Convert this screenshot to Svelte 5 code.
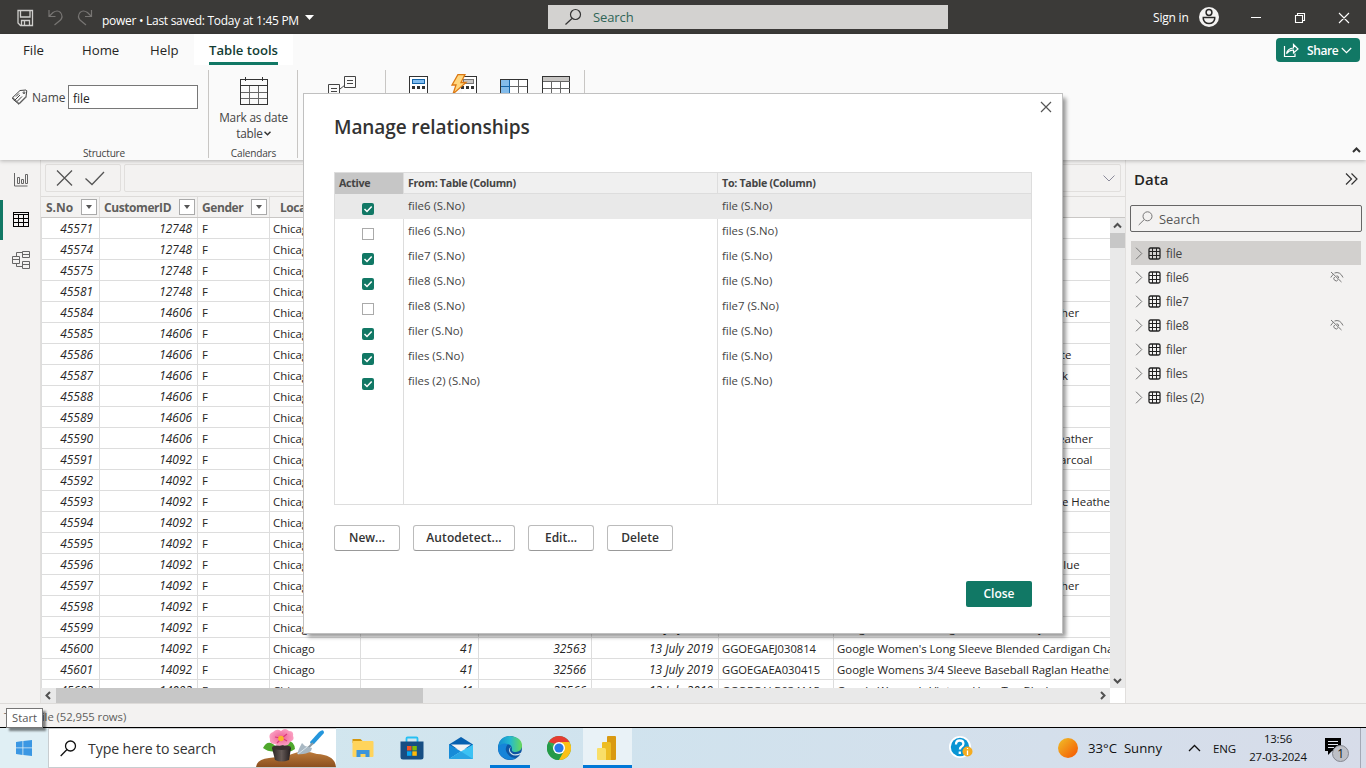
<script>
  const ids = [45571, 45574, 45575, 45581, 45584, 45585, 45586, 45587, 45588, 45589, 45590, 45591, 45592, 45593, 45594, 45595, 45596, 45597, 45598, 45599, 45600, 45601, 45602];
  // Trailing part of long product names, with its offset inside the column
  const tails = {
    45584: ['her', 228], 45586: ['te', 228], 45587: ['k', 229],
    45590: ['eather', 225], 45591: ['arcoal', 227], 45593: ['e Heather', 229],
    45596: ['Blue', 223], 45597: ['ther', 224]
  };
  const full = {
    45599: ['41', '32560', '13 July 2019', 'GGOEGAEJ030813', "Google Women's Long Sleeve Tee Navy"],
    45600: ['41', '32563', '13 July 2019', 'GGOEGAEJ030814', "Google Women's Long Sleeve Blended Cardigan Charcoal"],
    45601: ['41', '32566', '13 July 2019', 'GGOEGAEA030415', 'Google Womens 3/4 Sleeve Baseball Raglan Heather'],
    45602: ['41', '32566', '13 July 2019', 'GGOEGALB034115', "Google Women's Vintage Hero Tee Black"]
  };
  const rows = ids.map((id, i) => ({
    id, customer: i < 4 ? 12748 : i < 11 ? 14606 : 14092, tail: tails[id], full: full[id]
  }));
  const relations = [
    [true, 'file6 (S.No)', 'file (S.No)'], [false, 'file6 (S.No)', 'files (S.No)'],
    [true, 'file7 (S.No)', 'file (S.No)'], [true, 'file8 (S.No)', 'file (S.No)'],
    [false, 'file8 (S.No)', 'file7 (S.No)'], [true, 'filer (S.No)', 'file (S.No)'],
    [true, 'files (S.No)', 'file (S.No)'], [true, 'files (2) (S.No)', 'file (S.No)']
  ];
  const tables = [['file', false], ['file6', true], ['file7', false], ['file8', true], ['filer', false], ['files', false], ['files (2)', false]];
</script>

<div class="screen">
  <header class="titlebar">
    <svg class="quick" width="100" height="34" fill="none" stroke="#d0cfcd">
      <path d="M18 10.500h14.500v15H20.500l-2.500-2.500zM20.500 10.500v6.500h9.500v-6.500M21.500 25.500v-5h8v5M24.500 21v4" stroke-width="1.300" />
      <path d="M49 10v6.500h6.500M49 16.500l4-4q4.500-3 7.500 0 3 4 0 7.500l-6 5" stroke="#777573" stroke-width="1.200" />
      <path d="M91.500 10v6.500H85M91.500 16.500l-4-4q-4.500-3-7.500 0-3 4 0 7.500l6 5" stroke="#777573" stroke-width="1.200" />
    </svg>
    <span class="doc">power • Last saved: Today at 1:45 PM</span>
    <svg class="drop" width="9" height="5"><path d="M0 0h9l-4.500 5z" fill="#fff" /></svg>
    <div class="topsearch">
      <svg width="18" height="18" fill="none" stroke="#333" stroke-width="1.2"><circle cx="10.500" cy="6.500" r="5" /><path d="M7 10.500l-6.500 6" /></svg>
      <span>Search</span>
    </div>
    <span class="signin">Sign in</span>
    <svg class="user" width="20" height="20"><circle cx="10" cy="10" r="10" fill="#f3f2f1" /><g fill="none" stroke="#292827" stroke-width="1.5"><circle cx="10" cy="5.500" r="2.900" /><path d="M4.300 10.500h11.400v1.500q-1 4.500-5.700 4.500t-5.700-4.500z" /></g></svg>
    <svg class="winbtns" width="120" height="34" fill="none" stroke="#fff" stroke-width="1.1">
      <path d="M11 17.500h10M55.500 15.500h7v7h-7zM57.500 15.500v-2h7v7h-2M99 13l10 10M109 13l-10 10" />
    </svg>
  </header>

  <section class="ribbon">
    <nav class="tabs">
      <span class="tab t-file">File</span><span class="tab t-home">Home</span><span class="tab t-help">Help</span>
      <span class="tab on"><b>Table tools</b></span>
      <button class="share">
        <svg width="17" height="15" fill="none" stroke="#fff" stroke-width="1.2"><path d="M1.500 3v10.500h10.500v-3M3.500 10.500q1-5 7-5.500V1.500l4.500 4.500-4.500 4v-2.800q-4-.4-7 3.300z" /></svg>
        <span>Share</span>
        <svg width="11" height="7" fill="none" stroke="#fff" stroke-width="1.200"><path d="M.8 1l4.700 4.700L10.200 1" /></svg>
      </button>
    </nav>
    <div class="groups">
      <div class="group structure">
        <div class="namerow">
          <svg width="16" height="16" fill="none" stroke="#444" stroke-width="1"><path d="M.7 8.500L8 1.500l6-.5.800.8-.8 5.700-7 7zM3 11l5-5M5 12.500l5-5M4 7.500l3-3M.7 8.500v1.500l6.300 5.300 7-7V7.500" /><circle cx="12" cy="3.700" r=".9" /></svg>
          <span class="lab">Name</span><div class="field">file</div>
        </div>
        <span class="glabel">Structure</span>
      </div>
      <div class="group calendars">
        <svg width="28" height="28" fill="none" stroke="#333" shape-rendering="crispEdges"><path d="M.5 2.500h27v25h-27zM.5 8.500h27M5.500 0v4M22.500 0v4" /><path d="M1 15.500h26M1 21.500h26M9.500 9v18M18.500 9v18" stroke="#666" /></svg>
        <span class="big">Mark as date</span>
        <span class="big second">table<svg width="7" height="5" fill="none" stroke="#333" stroke-width="1.500"><path d="M.5.7l3 3 3-3" /></svg></span>
        <span class="glabel">Calendars</span>
      </div>
      <div class="group links"><svg width="30" height="20" fill="none" stroke="#444"><path d="M16.500.5h11v11h-11zM.5 8.500h11v11h-11zM19 4.500h6M19 7.500h6M3 12.500h6M3 15.500h6M12 13l5-4" /></svg></div>
      <div class="group calcs">
        <svg width="170" height="30" fill="none" stroke="#333">
          <g shape-rendering="crispEdges"><path d="M2.500 2.500h18v18h-18zM54.500 2.500h15v18h-15" fill="#fff" /><path d="M5.500 5.500h12v4h-12z" fill="#82bdf0" stroke="#1464a8" /><path d="M56 5.500h10v4h-10z" fill="#c8c6c4" stroke="#777" /><path d="M5 13.500h13M54 13.500h13" stroke-width="3" stroke-dasharray="3 2" /></g>
          <path d="M51 .500h7l-4 8h5L46 20l3-9h-4z" fill="#ffd780" stroke="#dc7812" stroke-width="1.300" />
          <g shape-rendering="crispEdges"><path d="M93.500 5.500h27v20h-27z" fill="#fff" /><path d="M94 6h9v20h-9z" fill="#83bceb" stroke="none" /><path d="M94 12.500h27M102.500 6v18M111.500 6v18" stroke="#666" /><path d="M93.500 26V5.500h9V26M94 12.500h9" stroke="#1464a8" /><path d="M93.500 5.500h27v20h-27z" /><path d="M135.500 2.500h27v25h-27z" fill="#fff" /><path d="M136 3h26v4h-26z" fill="#c8c6c4" stroke="none" /><path d="M135.500 7.500h27M135.500 14.500h27M144.500 8v12M153.500 8v12" stroke="#666" /></g>
        </svg>
      </div>
      <svg class="collapse" width="9" height="6" fill="none" stroke="#333" stroke-width="2"><path d="M1 5l3.500-3.500L8 5" /></svg>
    </div>
  </section>

  <main>
    <aside class="rail">
      <svg width="40" height="120" fill="none" stroke="#666">
        <path d="M14.500 13v13h13M17.500 17.500h2v6h-2zM21.500 19.500h2v4h-2zM25.500 14.500h2v9h-2z" stroke-width="1" />
        <rect x="0" y="40" width="3" height="40" fill="#117865" stroke="none" />
        <path d="M13.500 52.500h15v14h-15zM13 54h16M14 58.500h14M14 62.500h14M18.500 54v12M23.500 54v12" stroke="#000" shape-rendering="crispEdges" />
        <path d="M12.500 96.500h7v7h-7zM22.500 91.500h7v6h-7zM22.500 101.500h7v7h-7zM12.500 99.500h7M22.500 94.500h7M22.500 104.500h7M16.500 96v-3.500h6M16.500 104v2.500h6" />
      </svg>
    </aside>
    <section class="datagrid">
      <div class="formula">
        <div class="okbox"><svg width="74" height="26" fill="none" stroke="#555" stroke-width="1.300"><path d="M11 5.500l15 15M26 5.500l-15 15M39.500 13.500l6.500 6 12-12.500" /></svg></div>
        <div class="expr"><svg width="12" height="7" fill="none" stroke="#8a8a9a"><path d="M.5.5L6 6 11.500.5" /></svg></div>
      </div>
      <div class="colheads">
        {#each ['S.No', 'CustomerID', 'Gender'] as h}
          <div class="hcell"><span>{h}</span><i class="filter"><svg width="6" height="4"><path d="M0 0h6L3 4z" fill="#555" /></svg></i></div>
        {/each}
        <div class="hcell loc"><span>Location</span></div>
      </div>
      <div class="gridbody">
        <div class="rows">
          {#each rows as r}
            <div class="row">
              <span class="num">{r.id}</span><span class="num">{r.customer}</span><span class="gender">F</span><span>Chicago</span>
              {#if r.full}
                <span class="num">{r.full[0]}</span><span class="num">{r.full[1]}</span><span class="num">{r.full[2]}</span><span class="sku">{r.full[3]}</span><span class="last">{r.full[4]}</span>
              {:else}
                <span></span><span></span><span></span><span></span>
                <span class="last">{#if r.tail}<em style="margin-left: {r.tail[1] - 4}px">{r.tail[0]}</em>{/if}</span>
              {/if}
            </div>
          {/each}
        </div>
        <div class="vbar">
          <svg width="15" height="15" fill="none" stroke="#505050" stroke-width="2"><path d="M4 9.500L7.500 6 11 9.500" /></svg>
          <div class="vthumb"></div>
          <svg width="15" height="15" fill="none" stroke="#505050" stroke-width="2"><path d="M4 6l3.500 3.500L11 6" /></svg>
        </div>
      </div>
      <div class="hbar">
        <svg width="15" height="15" fill="none" stroke="#505050" stroke-width="2"><path d="M9 4L5.500 7.500 9 11" /></svg>
        <div class="hthumb"></div>
        <svg class="hr" width="15" height="15" fill="none" stroke="#505050" stroke-width="2"><path d="M6 4l3.500 3.500L6 11" /></svg>
        <div class="corner"></div>
      </div>
    </section>
    <aside class="fields">
      <div class="fhead"><b>Data</b><svg width="13" height="12" fill="none" stroke="#333" stroke-width="1.200"><path d="M1 .5L6.500 6 1 11.500M6.500.5L12 6l-5.500 5.500" /></svg></div>
      <div class="fsearch"><svg width="15" height="15" fill="none" stroke="#777"><circle cx="9.500" cy="5.300" r="4.500" /><path d="M6.300 8.500L.7 14" /></svg><span>Search</span></div>
      {#each tables as [name, hidden], i}
        <div class="frow" class:sel={i === 0}>
          <svg width="8" height="13" fill="none" stroke="#777"><path d="M1 .7l5.800 5.800L1 12.300" /></svg>
          <svg class="tbl" width="13" height="13" fill="none" stroke="#222"><rect x="1" y="1" width="11" height="11" rx="1.500" stroke-width="1.300" /><path d="M1 4.500h11M1 8.500h11M4.500 1v11M8.500 1v11" /></svg>
          <span>{name}</span>
          {#if hidden}<svg class="eye" width="14" height="12" fill="none" stroke="#777"><path d="M1 1l10.500 10M.8 6.500Q1.800 4.300 3.500 3.300M4.500 2q5.500-2 8.500 4.500" /><path d="M4.600 6a2.200 2.200 0 1 0 3.400 2.700M6.500 4.800a2.200 2.200 0 0 1 2.200 2.200" /></svg>{/if}
        </div>
      {/each}
    </aside>
  </main>
  <div class="status">Table: file (52,955 rows)</div>

  <footer class="taskbar">
    <div class="start"><svg width="16" height="16" fill="#3b97e3"><path d="M0 2l6.500-1v6.500H0zM7.300.9L16 0v7.500H7.300zM0 8.300h6.500V15L0 14zM7.300 8.300H16V16l-8.700-1z" /></svg></div>
    <div class="find">
      <svg width="17" height="17" fill="none" stroke="#111" stroke-width="1.300"><circle cx="10.500" cy="6" r="5" /><path d="M7 9.500L.7 16" /></svg>
      <span>Type here to search</span>
      <svg class="garden" width="80" height="38" viewBox="0 0 80 38">
        <defs><linearGradient id="soil" y2="1" x2="0"><stop stop-color="#bd7b3b" /><stop offset="1" stop-color="#8b501f" /></linearGradient><linearGradient id="pot"><stop stop-color="#292524" /><stop offset=".5" stop-color="#645956" /><stop offset="1" stop-color="#211b1c" /></linearGradient><radialGradient id="petal"><stop stop-color="#ee5d94" /><stop offset="1" stop-color="#fb9fc1" /></radialGradient></defs>
        <path d="M0 38q1-8 13-9 10-1 20-3 14-6 28-1 18 1 19 13z" fill="url(#soil)" />
        <path d="M7 19q4-8 10-4l7 6q-9 4-17-2zM39 20q-1-8-7-8l-6 9q7 4 13-1z" fill="#4fa82c" />
        <path d="M16 19h19l-2 12q-8 3-14 0z" fill="url(#pot)" /><ellipse cx="25.500" cy="18.500" rx="9.500" ry="2.500" fill="#3a302f" />
        <path d="M17 3q4-4 8-1 4-4 8 0 5 0 4 5 2 4-3 6-2 5-7 3-5 2-8-1-6 0-5-5-2-5 3-7z" fill="url(#petal)" />
        <path d="M19 8l5 1M31 5l-5 4M31 12l-5-3M21 14l4-4" stroke="#da3a7b" stroke-width="1.200" /><circle cx="25" cy="9.500" r="2.800" fill="#f7b62b" />
        <path d="M54 13l9-10q5-4 5 1L58 15q-4 1-4-2z" fill="#2496dc" /><path d="M51 20l6-6" stroke="#8a979f" stroke-width="2" /><path d="M46 14q-3 5-5 11 8 1 14-3l1-3-7-2z" fill="#a9b8c3" /><path d="M42 25l9-7" stroke="#d9e5ec" />
      </svg>
    </div>
    <div class="apps">
      <div class="app"><svg width="24" height="24"><path d="M1.500 3h8l2 2-2 2h-8z" fill="#d5970c" /><rect x="1.500" y="5" width="21" height="16" rx="1" fill="#ffd45c" /><path d="M5.500 21v-7h13v7h-4v-3h-5v3z" fill="#3c94db" /></svg></div>
      <div class="app"><svg width="24" height="24"><path d="M6.500 6V2.500q0-1 1-1h9q1 0 1 1V6" fill="none" stroke="#27c0f3" stroke-width="1.800" /><path d="M.5 5.500h23V21q0 2.500-2.500 2.500H3Q.5 23.500.5 21z" fill="#174e83" /><path d="M7 10h4.500v4.500H7z" fill="#f35325" /><path d="M12.300 10h4.500v4.500h-4.500z" fill="#81bc06" /><path d="M7 15.300h4.500v4.500H7z" fill="#05a6f0" /><path d="M12.300 15.300h4.500v4.500h-4.500z" fill="#ffba08" /></svg></div>
      <div class="app"><svg width="24" height="24"><path d="M0 8.500L12 1l12 7.500v4H0z" fill="#0861b0" /><path d="M2 8.500h20l-10 7z" fill="#f4f4f4" /><path d="M0 8.500l12 7L0 23z" fill="#168bd8" /><path d="M24 8.500V23H0l12-7.500z" fill="#3cc2f4" /><path d="M0 23l12-7.500L24 23z" fill="#2aa5e4" /></svg></div>
      <div class="app edge"><svg width="24" height="24"><defs><linearGradient id="eg"><stop stop-color="#138bd4" /><stop offset=".5" stop-color="#25b9cf" /><stop offset="1" stop-color="#69da57" /></linearGradient></defs><circle cx="12" cy="12" r="12" fill="#0e56a3" /><path d="M0 12Q1 0 12 0q12 1 12 10 0 5-6 6-5 0-4-3 0-5-6-5-5 0-8 4z" fill="url(#eg)" /><path d="M0 12q3-6 10-4-4 4-1 9 3 5 9 5-5 3-10 1Q0 20 0 12z" fill="#1684d8" /><path d="M13 10.500q-3 5 2 7.500 5 1 9-2V20h-1.500l.5-2q-6 3-10 0-4-4 0-7.500z" fill="#d3e3ec" /></svg></div>
      <div class="app"><svg width="24" height="24"><circle cx="12" cy="12" r="12" fill="#34a853" /><path d="M1.600 6A12 12 0 0 1 22.400 6L12 9z" fill="#e53c31" /><path d="M1.600 6A12 12 0 0 0 12 24l5-9-10-1z" fill="#259a48" /><path d="M22.400 6A12 12 0 0 1 12 24l5-9-3-9z" fill="#fbc016" /><circle cx="12" cy="12" r="6" fill="#fff" /><circle cx="12" cy="12" r="4.600" fill="#2878e8" /></svg></div>
      <div class="app active"><svg width="24" height="24"><path d="M12 0h7q1 0 1 1v22q0 1-1 1h-8V1q0-1 1-1z" fill="#d99a12" /><path d="M7 6h6.500q1.500 0 1.500 1.500V24H6V7q0-1 1-1z" fill="#edbd24" /><path d="M2 12h6.500q1.500 0 1.500 1.500V24H2q-1 0-1-1V13q0-1 1-1z" fill="#f9df69" /></svg></div>
    </div>
    <svg class="help" width="24" height="24"><circle cx="11" cy="11" r="11" fill="#fff" /><circle cx="11" cy="11" r="9.200" fill="#0995d4" /><path d="M7 8.500q0-4 3.700-4t3.700 3.300q0 2-2 3-1.500 1-1.500 2.700M10.800 15.500v2.500" fill="none" stroke="#fff" stroke-width="2.300" /><circle cx="18.500" cy="15.500" r="5" fill="#f5ac20" /><path d="M18.500 12v1M18.500 14.500V19" stroke="#fff" stroke-width="1.300" /></svg>
    <div class="sun"></div>
    <span class="weather">33°C&nbsp;&nbsp;Sunny</span>
    <svg class="caret" width="13" height="8" fill="none" stroke="#111" stroke-width="1.300"><path d="M1 7l5.500-5.500L12 7" /></svg>
    <span class="lang">ENG</span>
    <div class="clock"><span>13:56</span><span class="date">27-03-2024</span></div>
    <div class="note"><svg width="26" height="26"><path d="M1 1h16v13H8l-4 4v-4H1z" fill="#000" /><path d="M4 4.500h10M4 7.500h10M4 10.500h6" stroke="#dfe2eb" /><circle cx="16.500" cy="16.500" r="8" fill="#bdbfc6" stroke="#858790" /><text x="13.200" y="21" font-size="12" fill="#111">1</text></svg></div>
  </footer>

  <div class="tip">Start</div>

  <div class="dialog">
    <svg class="x" width="12" height="12" fill="none" stroke="#555" stroke-width="1.200"><path d="M1 1l10 10M11 1L1 11" /></svg>
    <h1>Manage relationships</h1>
    <div class="rel">
      <div class="rrow rh"><b>Active</b><b>From: Table (Column)</b><b>To: Table (Column)</b></div>
      {#each relations as [on, from, to], i}
        <div class="rrow" class:hot={i === 0}>
          <div class="cb"><i class:on>{#if on}<svg width="12" height="12" fill="none" stroke="#fff" stroke-width="1.500"><path d="M2.500 6l2.500 2.500L9.700 3.500" /></svg>{/if}</i></div>
          <span>{from}</span><span>{to}</span>
        </div>
      {/each}
      <div class="rrow fill"><span></span><span></span><span></span></div>
    </div>
    <div class="actions"><button>New...</button><button class="wide">Autodetect...</button><button>Edit...</button><button>Delete</button></div>
    <div class="closing"><button class="primary">Close</button></div>
  </div>
</div>

<style>
  :global(body) { margin: 0; overflow: hidden; }
  .screen { position: relative; width: 1366px; height: 768px; display: flex; flex-direction: column; overflow: hidden; background: #f3f2f1; font-family: "Open Sans", "Noto Sans", sans-serif; font-size: 11.400px; color: #252423; white-space: nowrap; }
  .screen * { box-sizing: border-box; }
  svg { display: block; flex: none; }
  button { font: inherit; padding: 0; }
  .titlebar { height: 34px; flex: none; display: flex; align-items: center; background: #3b3a38; color: #fff; }
  .doc { width: 198px; margin-left: 2px; padding-top: 6px; font-size: 12px; letter-spacing: -0.28px; }
  .drop { margin-left: 5px; }
  .topsearch { width: 400px; height: 24px; margin-left: 234px; display: flex; align-items: center; gap: 10px; padding-left: 17px; background: #d3d2d0; color: #2f6557; font-size: 13px; letter-spacing: -0.1px; }
  .signin { width: 38px; margin-left: 205px; font-size: 12px; letter-spacing: -0.200px; }
  .user { margin-left: 8px; }
  .winbtns { margin-left: 21px; }

  .ribbon { height: 126px; flex: none; background: #fafafa; box-shadow: 0 1px 4px #0004; z-index: 1; }
  .tabs { height: 34px; display: flex; font-size: 13.200px; line-height: 32px; }
  .t-file { width: 59px; margin-left: 23px; }
  .t-home { width: 68px; }
  .t-help { width: 44px; }
  .tab.on { width: 99px; height: 31px; padding-left: 15px; background: #fff; color: #133d34; }
  .tab b { display: block; width: 69px; height: 31px; font-weight: 600; font-size: 13.100px; letter-spacing: 0; border-bottom: 3px solid #117865; }
  .share { width: 84px; height: 24px; margin: 4px 0 0 983px; display: flex; align-items: center; border: 0; border-radius: 4px; background: #117865; color: #fff; padding-left: 7px; font-size: 12px; font-weight: 600; letter-spacing: -0.400px; }
  .share span { width: 30px; margin: 0 4px 0 7px; padding-top: 2px; }
  .groups { height: 92px; display: flex; color: #444; }
  .group { height: 88px; margin-top: 2px; border-right: 1px solid #c8c6c4; display: flex; flex-direction: column; align-items: center; }
  .structure { width: 209px; }
  .namerow { width: 186px; height: 24px; margin: 15px 0 0 2px; display: flex; align-items: center; font-size: 12px; }
  .namerow .lab { width: 36px; margin-left: 4px; padding-top: 1px; }
  .field { width: 130px; height: 24px; border: 1px solid #777; background: #fff; padding: 4px 4px; line-height: 17px; color: #222; }
  .glabel { margin-top: auto; height: 13px; line-height: 17px; font-size: 10.100px; letter-spacing: -0.200px; }
  .calendars { width: 89px; padding: 7px 0 0 1px; }
  .big { height: 16px; margin-top: 4px; line-height: 17px; font-size: 11.800px; letter-spacing: -0.200px; }
  .second { margin-top: 0; display: flex; align-items: center; gap: 1px; }
  .links { width: 88px; padding: 6px 0 0 2px; }
  .calcs { width: 199px; align-items: flex-start; padding: 4px 0 0 21px; }
  .collapse { margin: 79px 0 0 767px; }

  main { height: 543px; flex: none; display: flex; }
  .rail { width: 41px; border-right: 1px solid #e1dfdd; }
  .datagrid { width: 1084px; display: flex; flex-direction: column; }
  .formula { height: 36px; display: flex; padding: 4px 4px 4px 4px; gap: 3px; }
  .okbox { width: 76px; height: 28px; border: 1px solid #e1dfdd; border-radius: 2px; }
  .expr { flex: 1; height: 28px; border: 1px solid #e1dfdd; border-radius: 2px; display: flex; justify-content: flex-end; align-items: center; padding-right: 5px; }
  .colheads { height: 22px; display: grid; grid-template-columns: 59px 98px 72px 92px; border-top: 1px solid #dddbd9; border-bottom: 1px solid #c9c7c5; color: #605e5c; font-weight: 700; font-size: 12px; letter-spacing: -0.420px; }
  .hcell { display: flex; align-items: center; justify-content: space-between; padding: 0 2px 0 4px; border-right: 1px solid #dddbd9; }
  .hcell:first-child { padding-left: 5px; letter-spacing: 0; }
  .loc { padding-left: 10px; }
  .filter { width: 16px; height: 16px; display: grid; place-items: center; border: 1px solid #aaa; background: #fff; }
  .gridbody { height: 470px; display: flex; overflow: hidden; }
  .rows { width: 1069px; overflow: hidden; background: #fff; }
  .row { height: 21px; display: grid; grid-template-columns: 59px 98px 72px 91px 118px 113px 127px 115px 276px; line-height: 21px; border-bottom: 1px solid #dddddd; }
  .row > span { height: 21px; padding: 0 4px 0 3px; border-right: 1px solid #dddddd; overflow: hidden; }
  .row > .num { text-align: right; font-style: italic; font-size: 11.900px; letter-spacing: 0; padding-right: 5px; }
  .row > span:first-child { border-left: 1px solid #ddd; padding-right: 6px; }
  .row > .gender { padding-left: 4px; }
  .row > .sku { font-size: 11.200px; padding-right: 0; }
  .row > .last { border-right: 0; padding-right: 0; }
  .row em { font-style: normal; }
  .vbar { width: 15px; background: #e9e9e9; display: flex; flex-direction: column; }
  .vthumb { height: 15px; margin-bottom: auto; background: #c7c7c7; }
  .hbar { height: 15px; display: flex; background: #e9e9e9; }
  .hthumb { width: 367px; background: #c7c7c7; }
  .hr { margin-left: auto; }
  .corner { width: 15px; background: #fff; }
  .fields { width: 241px; border-left: 1px solid #e1dfdd; padding: 0 4px; }
  .fhead { height: 38px; margin-bottom: 7px; padding: 0 4px 0 4px; display: flex; justify-content: space-between; align-items: center; font-size: 15px; }
  .fhead b { font-weight: 600; }
  .fsearch { height: 27px; width: 232px; margin-bottom: 9px; border: 1px solid #666; border-radius: 2px; display: flex; align-items: center; gap: 6px; padding-left: 7px; font-size: 12.900px; color: #555; }
  .frow { height: 24px; width: 230px; margin-left: 1px; padding-left: 4px; display: flex; align-items: center; font-size: 12px; color: #444; }
  .sel { background: #d2d0ce; }
  .tbl { margin: 0 5px 0 5px; }
  .frow span { padding-top: 1px; letter-spacing: -0.200px; }
  .eye { margin-left: auto; margin-right: 17px; }
  .status { height: 25px; flex: none; border-top: 1px solid #dddbd9; border-bottom: 1px solid #000; padding-left: 4px; line-height: 26px; color: #605e5c; font-size: 11.300px; letter-spacing: -0.060px; }

  .taskbar { height: 40px; flex: none; display: flex; align-items: center; background: linear-gradient(90deg, #d4e9ef, #d0e3ee 45%, #d7dce9); color: #111; }
  .start { width: 48px; height: 40px; display: grid; place-items: center; background: #e0eff4; }
  .find { width: 288px; height: 40px; display: flex; align-items: center; background: #fff; border: 1px solid #c8cdd0; border-right: 0; padding-left: 11px; font-size: 14.100px; color: #333; }
  .find span { width: 129px; margin-left: 11px; letter-spacing: -0.080px; }
  .garden { margin-left: auto; }
  .apps { width: 294px; height: 40px; margin-left: 2px; display: flex; }
  .app { width: 49px; height: 40px; display: grid; place-items: center; }
  .edge { background: linear-gradient(#0078d7, #0078d7) 50% 100% / 40px 3px no-repeat; }
  .active { background: #e9f2f7; border-bottom: 3px solid #0078d7; padding-top: 3px; }
  .help { margin-left: 317px; }
  .sun { width: 20px; height: 20px; margin-left: 85px; border-radius: 50%; background: linear-gradient(135deg, #f0c12a, #f46808 80%); }
  .weather { width: 77px; margin-left: 10px; font-size: 13.200px; }
  .caret { margin-left: 23px; }
  .lang { width: 25px; margin-left: 12px; font-size: 11.500px; letter-spacing: -0.200px; }
  .clock { width: 62px; margin-left: 9px; display: flex; flex-direction: column; align-items: center; line-height: 18px; font-size: 11.400px; letter-spacing: -0.200px; }
  .note { width: 37px; height: 40px; margin-left: 15px; padding-top: 9px; border-right: 1px solid #a4a9b6; }
  .tip { position: absolute; left: 6px; top: 708px; width: 37px; height: 20px; border: 1px solid #767676; background: #fff; color: #575757; text-align: center; line-height: 18px; font-size: 11.200px; box-shadow: 3px 3px 2px #0007; }

  .dialog { position: absolute; z-index: 2; left: 303px; top: 93px; width: 760px; height: 541px; border: 1px solid #c0c0c0; background: #fff; padding: 20px 30px 0; box-shadow: 4px 4px 4px -1px #0006; }
  .x { position: absolute; right: 10px; top: 7px; }
  h1 { height: 28px; margin: 0 0 30px; font-size: 19px; line-height: 27px; font-weight: 600; color: #333; letter-spacing: -0.100px; }
  .rel { width: 698px; height: 333px; border: 1px solid #ddd; display: flex; flex-direction: column; color: #444; }
  .rrow { height: 25px; display: grid; grid-template-columns: 69px 314px 313px; }
  .rrow > * { border-right: 1px solid #ddd; padding-left: 4px; line-height: 24px; }
  .rrow > :last-child { border-right: 0; }
  .rh { height: 21px; flex: none; background: #f0f0f0; border-bottom: 1px solid #ddd; }
  .rh b { line-height: 21px; font-size: 10.700px; letter-spacing: -0.300px; }
  .rh b:first-child { background: #c6c6c6; }
  .hot { background: #e9e9e9; }
  .hot > * { border-right-color: #e9e9e9; }
  .fill { flex: 1; height: auto; }
  .cb { display: flex; padding: 9px 0 0 27px; }
  .cb i { width: 12px; height: 12px; border: 1px solid #aaa; background: #fff; }
  .cb i.on { border: 0; border-radius: 2px; background: #117865; }
  .actions { display: flex; gap: 13px; margin-top: 20px; }
  .actions button, .primary { width: 66px; height: 26px; padding-bottom: 2px; border: 1px solid #bbb; border-bottom-color: #999; border-radius: 3px; background: #fff; color: #333; font-size: 12px; font-weight: 600; }
  .actions .wide { width: 102px; letter-spacing: 0.080px; }
  .closing { display: flex; justify-content: flex-end; margin-top: 30px; }
  .closing .primary { background: #117865; color: #fff; border: 0; border-radius: 2px; }
</style>
